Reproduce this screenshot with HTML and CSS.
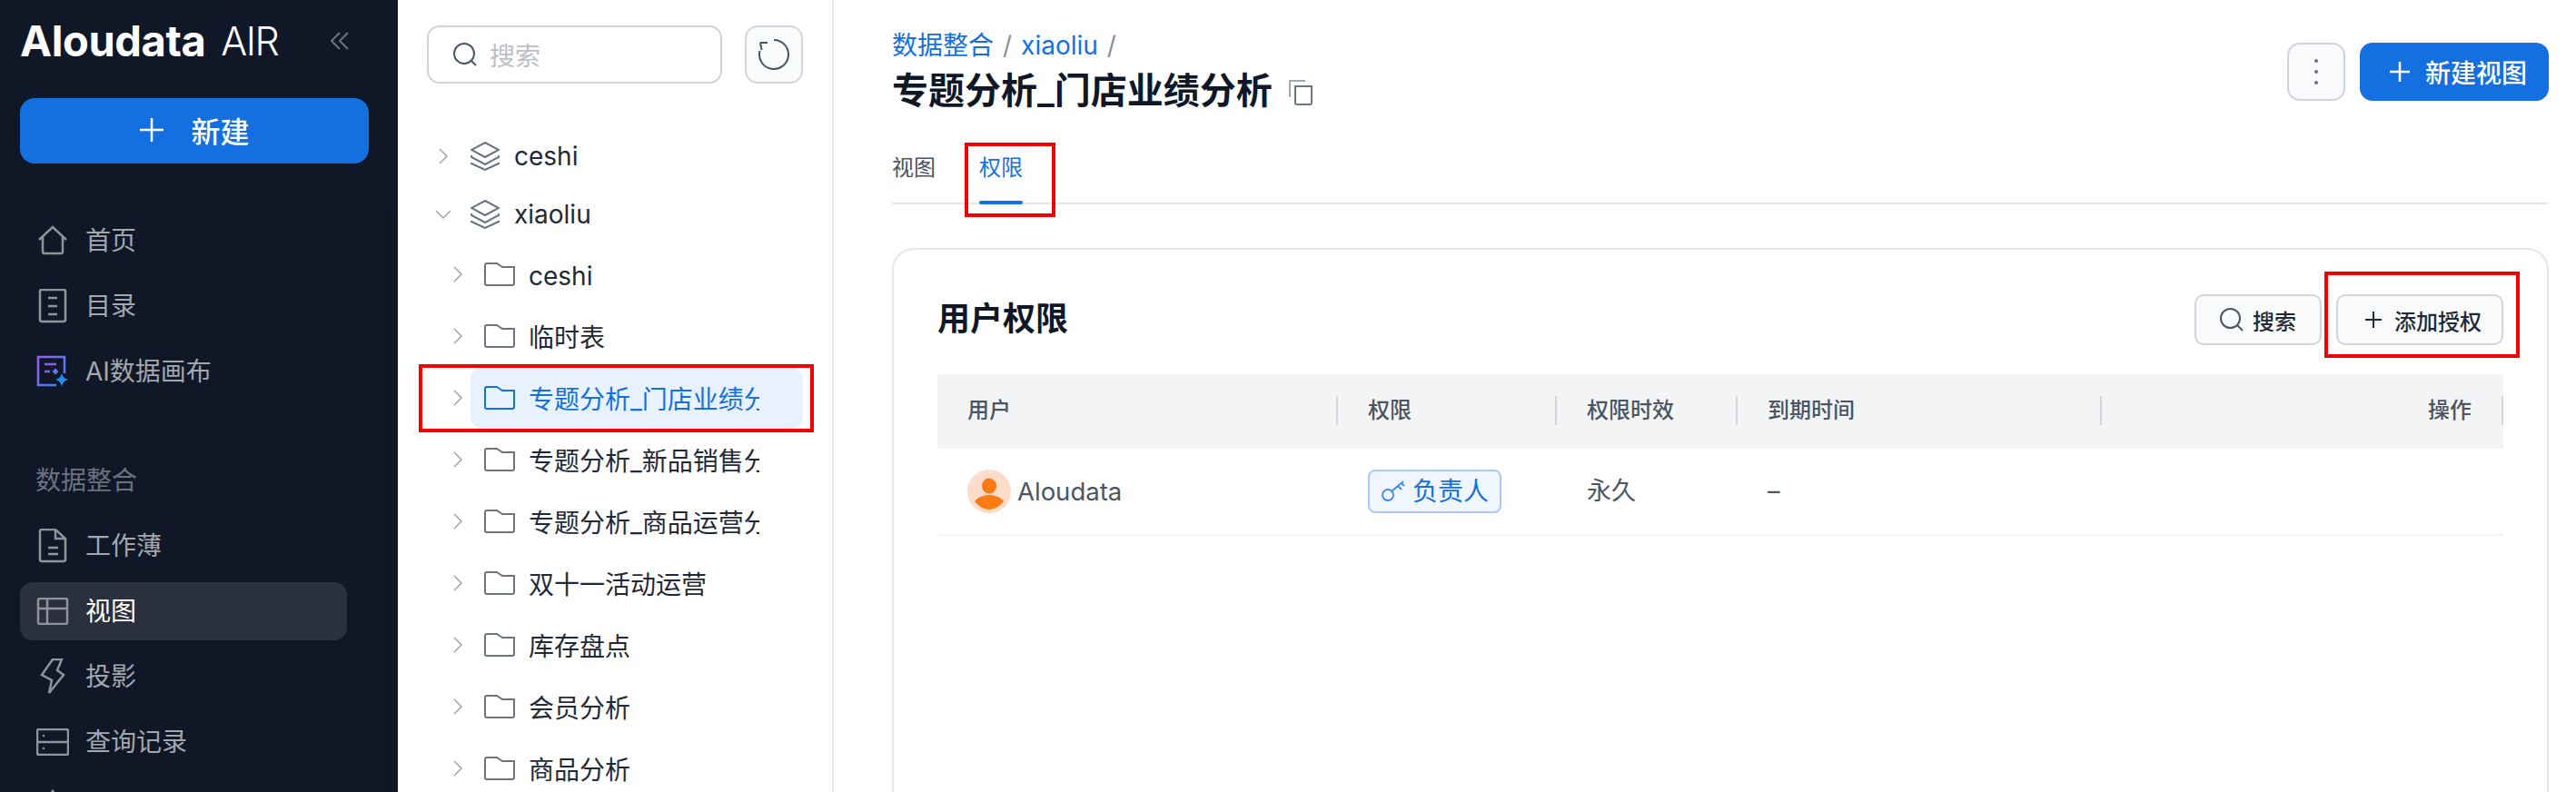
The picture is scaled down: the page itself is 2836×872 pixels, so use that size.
FILE: index.html
```html
<!DOCTYPE html>
<html lang="zh-CN">
<head>
  <meta charset="UTF-8">
  <title>Aloudata AIR</title>
  <link rel="stylesheet" href="styles.css">
</head>
<body>
  <!-- left nav -->
  <aside class="sidebar">
    <div class="logo-row">
      <span class="logo-main">Aloudata</span>
      <span class="logo-sub">AIR</span>
      <svg class="collapse" width="20" height="20" viewBox="0 0 20 20"><path d="M10 1 1 10l9 9M19 1l-9 9 9 9"/></svg>
    </div>
    <button class="new-btn">
      <svg width="28" height="28" viewBox="0 0 28 28"><path d="M14 1v26M1 14h26"/></svg>
      <span>新建</span>
    </button>
    <div class="scroll-track"></div>
    <nav class="nav">
      <a class="nav-item">
        <svg class="nav-icon" width="34" height="34" viewBox="0 0 34 34"><path d="M2 16 17 2l15 14M6 13v16a2 2 0 0 0 2 2h18a2 2 0 0 0 2-2V13"/></svg>
        首页
      </a>
      <a class="nav-item">
        <svg class="nav-icon" width="34" height="38" viewBox="0 0 34 38"><rect x="3" y="1" width="28" height="35" rx="2"/><path d="M12 10h10M12 19h10M12 28h10"/></svg>
        目录
      </a>
      <a class="nav-item">
        <svg class="nav-icon nav-icon-ai" width="36" height="36" viewBox="0 0 36 36">
          <defs><linearGradient id="aiGrad" x1="0" y1="0" x2="1" y2="1"><stop offset="0" stop-color="#9b5cf0"/><stop offset="1" stop-color="#2f8bf2"/></linearGradient></defs>
          <path stroke="url(#aiGrad)" d="M31 20V2H2v31h20"/>
          <path stroke="#8b5cf6" d="M9 10h13M9 18h6"/>
          <path stroke="#5b7cf5" d="M18 18h6M21 15v6"/>
          <path class="ai-star" d="M28 20c1 4 3 6 7 7-4 1-6 3-7 8-1-5-3-7-7-8 4-1 6-3 7-7z"/>
        </svg>
        AI数据画布
      </a>
      <div class="nav-label">数据整合</div>
      <a class="nav-item">
        <svg class="nav-icon" width="34" height="38" viewBox="0 0 34 38"><path d="M5 1h15l11 10v23a2 2 0 0 1-2 2H5a2 2 0 0 1-2-2V3a2 2 0 0 1 2-2zM20 1v10h11M12 21h11M12 28h11"/></svg>
        工作薄
      </a>
      <a class="nav-item active">
        <svg class="nav-icon" width="34" height="30" viewBox="0 0 34 30"><rect x="1" y="1" width="32" height="28" rx="2"/><path d="M1 12h32M11 1v28"/></svg>
        视图
      </a>
      <a class="nav-item">
        <svg class="nav-icon" width="26" height="40" viewBox="0 0 26 40"><path d="M13 1h10l-5 12 7 5L9 38l3-14-11-6z"/></svg>
        投影
      </a>
      <a class="nav-item">
        <svg class="nav-icon" width="36" height="30" viewBox="0 0 36 30"><rect x="1" y="1" width="34" height="28" rx="2"/><path d="M1 15h34"/><circle class="dot" cx="8" cy="8" r="1.3"/><circle class="dot" cx="8" cy="22" r="1.3"/></svg>
        查询记录
      </a>
      <a class="nav-item">
        <svg class="nav-icon nav-icon-cut" width="34" height="34" viewBox="0 0 34 34"><path d="M17 2 3 22h28z"/></svg>
      </a>
    </nav>
  </aside>

  <!-- tree panel -->
  <section class="tree-panel">
    <div class="tree-search">
      <div class="search-input">
        <svg class="search-icon" width="28" height="28" viewBox="0 0 28 28"><circle cx="13" cy="13" r="11"/><path d="m21 21 5 5"/></svg>
        <span class="placeholder">搜索</span>
      </div>
      <button class="icon-btn">
        <svg class="refresh-icon" width="36" height="36" viewBox="0 0 36 36"><path d="M18 2a16 16 0 1 1-15.500 12M3 5h8M3 5l1.500 8"/></svg>
      </button>
    </div>
    <ul class="tree">
      <li class="tree-row top">
        <svg class="chev" width="18" height="18" viewBox="0 0 18 18"><path d="m5 1 8 8-8 8"/></svg>
        <svg class="db-icon" width="32" height="32" viewBox="0 0 32 32"><path d="m16 1 15 8-15 8L1 9zM1 15l0 2 15 8 15-8 0-2M1 23l0 1 15 7 15-7 0-1"/></svg>
        <span class="tree-label">ceshi</span>
      </li>
      <li class="tree-row top">
        <svg class="chev" width="18" height="18" viewBox="0 0 18 18"><path d="m1 5 8 8 8-8"/></svg>
        <svg class="db-icon" width="32" height="32" viewBox="0 0 32 32"><path d="m16 1 15 8-15 8L1 9zM1 15l0 2 15 8 15-8 0-2M1 23l0 1 15 7 15-7 0-1"/></svg>
        <span class="tree-label">xiaoliu</span>
      </li>
      <li class="tree-row sub">
        <svg class="chev" width="18" height="18" viewBox="0 0 18 18"><path d="m5 1 8 8-8 8"/></svg>
        <div class="tree-cell">
          <svg class="folder" width="34" height="26" viewBox="0 0 34 26"><path d="M1 3a2 2 0 0 1 2-2h11l6 4h13v18a2 2 0 0 1-2 2H3a2 2 0 0 1-2-2z"/></svg>
          <span class="tree-label">ceshi</span>
        </div>
      </li>
      <li class="tree-row sub">
        <svg class="chev" width="18" height="18" viewBox="0 0 18 18"><path d="m5 1 8 8-8 8"/></svg>
        <div class="tree-cell">
          <svg class="folder" width="34" height="26" viewBox="0 0 34 26"><path d="M1 3a2 2 0 0 1 2-2h11l6 4h13v18a2 2 0 0 1-2 2H3a2 2 0 0 1-2-2z"/></svg>
          <span class="tree-label">临时表</span>
        </div>
      </li>
      <li class="tree-row sub selected">
        <svg class="chev" width="18" height="18" viewBox="0 0 18 18"><path d="m5 1 8 8-8 8"/></svg>
        <div class="tree-cell">
          <svg class="folder" width="34" height="26" viewBox="0 0 34 26"><path d="M1 3a2 2 0 0 1 2-2h11l6 4h13v18a2 2 0 0 1-2 2H3a2 2 0 0 1-2-2z"/></svg>
          <span class="tree-label">专题分析_门店业绩分析</span>
        </div>
      </li>
      <li class="tree-row sub">
        <svg class="chev" width="18" height="18" viewBox="0 0 18 18"><path d="m5 1 8 8-8 8"/></svg>
        <div class="tree-cell">
          <svg class="folder" width="34" height="26" viewBox="0 0 34 26"><path d="M1 3a2 2 0 0 1 2-2h11l6 4h13v18a2 2 0 0 1-2 2H3a2 2 0 0 1-2-2z"/></svg>
          <span class="tree-label">专题分析_新品销售分析</span>
        </div>
      </li>
      <li class="tree-row sub">
        <svg class="chev" width="18" height="18" viewBox="0 0 18 18"><path d="m5 1 8 8-8 8"/></svg>
        <div class="tree-cell">
          <svg class="folder" width="34" height="26" viewBox="0 0 34 26"><path d="M1 3a2 2 0 0 1 2-2h11l6 4h13v18a2 2 0 0 1-2 2H3a2 2 0 0 1-2-2z"/></svg>
          <span class="tree-label">专题分析_商品运营分析</span>
        </div>
      </li>
      <li class="tree-row sub">
        <svg class="chev" width="18" height="18" viewBox="0 0 18 18"><path d="m5 1 8 8-8 8"/></svg>
        <div class="tree-cell">
          <svg class="folder" width="34" height="26" viewBox="0 0 34 26"><path d="M1 3a2 2 0 0 1 2-2h11l6 4h13v18a2 2 0 0 1-2 2H3a2 2 0 0 1-2-2z"/></svg>
          <span class="tree-label">双十一活动运营</span>
        </div>
      </li>
      <li class="tree-row sub">
        <svg class="chev" width="18" height="18" viewBox="0 0 18 18"><path d="m5 1 8 8-8 8"/></svg>
        <div class="tree-cell">
          <svg class="folder" width="34" height="26" viewBox="0 0 34 26"><path d="M1 3a2 2 0 0 1 2-2h11l6 4h13v18a2 2 0 0 1-2 2H3a2 2 0 0 1-2-2z"/></svg>
          <span class="tree-label">库存盘点</span>
        </div>
      </li>
      <li class="tree-row sub">
        <svg class="chev" width="18" height="18" viewBox="0 0 18 18"><path d="m5 1 8 8-8 8"/></svg>
        <div class="tree-cell">
          <svg class="folder" width="34" height="26" viewBox="0 0 34 26"><path d="M1 3a2 2 0 0 1 2-2h11l6 4h13v18a2 2 0 0 1-2 2H3a2 2 0 0 1-2-2z"/></svg>
          <span class="tree-label">会员分析</span>
        </div>
      </li>
      <li class="tree-row sub">
        <svg class="chev" width="18" height="18" viewBox="0 0 18 18"><path d="m5 1 8 8-8 8"/></svg>
        <div class="tree-cell">
          <svg class="folder" width="34" height="26" viewBox="0 0 34 26"><path d="M1 3a2 2 0 0 1 2-2h11l6 4h13v18a2 2 0 0 1-2 2H3a2 2 0 0 1-2-2z"/></svg>
          <span class="tree-label">商品分析</span>
        </div>
      </li>
    </ul>
  </section>

  <!-- main content -->
  <main class="main">
    <header class="page-head">
      <div>
        <div class="crumbs">
          <a>数据整合</a><span class="sep">/</span><a>xiaoliu</a><span class="sep">/</span>
        </div>
        <h1 class="page-title">
          专题分析_门店业绩分析
          <svg class="copy-icon" width="26" height="28" viewBox="0 0 26 28"><path class="copy-back" d="M1 19V1h17"/><path d="M7 7h18v18a2 2 0 0 1-2 2H9a2 2 0 0 1-2-2z"/></svg>
        </h1>
      </div>
      <div class="head-actions">
        <button class="icon-btn more-btn">
          <svg width="6" height="30" viewBox="0 0 6 30"><circle cx="3" cy="3" r="2"/><circle cx="3" cy="15" r="2"/><circle cx="3" cy="27" r="2"/></svg>
        </button>
        <button class="primary-btn">
          <svg width="24" height="24" viewBox="0 0 24 24"><path d="M12 1v22M1 12h22"/></svg>
          新建视图
        </button>
      </div>
    </header>

    <div class="tabs">
      <a class="tab">视图</a>
      <a class="tab active">权限</a>
    </div>

    <section class="card">
      <div class="card-head">
        <h2 class="card-title">用户权限</h2>
        <div class="card-actions">
          <button class="ghost-btn search-btn">
            <svg class="search-icon" width="26" height="26" viewBox="0 0 26 26"><circle cx="11.500" cy="11.500" r="10.500"/><path d="m19 19 6 6"/></svg>
            搜索
          </button>
          <button class="ghost-btn add-btn">
            <svg class="plus-dark" width="20" height="20" viewBox="0 0 20 20"><path d="M10 1v18M1 10h18"/></svg>
            添加授权
          </button>
        </div>
      </div>

      <div class="table">
        <div class="table-row table-head">
          <div class="th">用户</div>
          <div class="th">权限</div>
          <div class="th">权限时效</div>
          <div class="th">到期时间</div>
          <div class="th th-right">操作</div>
        </div>
        <div class="table-row table-body">
          <div class="td user-cell">
            <svg width="48" height="48" viewBox="0 0 48 48">
              <circle cx="24" cy="24" r="24" fill="#fddcc9"/>
              <ellipse cx="24" cy="18" rx="8" ry="8.500" fill="#fb7a14"/>
              <path d="M8 35c4-5 10-7 16-7s12 2 16 7c-4 5-10 9-16 9s-12-4-16-9z" fill="#fb7a14"/>
            </svg>
            <span>Aloudata</span>
          </div>
          <div class="td">
            <span class="role-tag">
              <svg width="28" height="24" viewBox="0 0 28 24"><circle cx="8" cy="16" r="6"/><path d="m12 12 13-11M19 6l4 4M23 3l3 3"/></svg>
              负责人
            </span>
          </div>
          <div class="td">永久</div>
          <div class="td">–</div>
          <div class="td"></div>
        </div>
      </div>
    </section>
  </main>

  <!-- red annotation boxes drawn over the screenshot -->
  <div class="mark mark-row"></div>
  <div class="mark mark-tab"></div>
  <div class="mark mark-add"></div>
</body>
</html>
```

FILE: styles.css
```css
* {
  box-sizing: border-box;
}
html, body {
  height: 100%;
}
body {
  margin: 0;
  display: flex;
  height: 872px;
  overflow: hidden;
  position: relative;
  background: #fff;
  color: #1f2937;
  font-family: Inter, "Noto Sans CJK SC", sans-serif;
  font-size: 28px;
}
button {
  font-family: inherit;
  cursor: pointer;
}
svg {
  flex-shrink: 0;
  fill: none;
}

/* sidebar */
.sidebar {
  width: 438px;
  flex-shrink: 0;
  padding: 0 32px 0 22px;
  background: #101828;
  position: relative;
}
.logo-row {
  display: flex;
  align-items: center;
  height: 108px;
  padding-bottom: 18px;
  color: #fff;
}
.logo-main {
  font-size: 47px;
  font-weight: 700;
  letter-spacing: -0.4px;
  line-height: 60px;
}
.logo-sub {
  margin-left: 17px;
  font-size: 43px;
  font-weight: 300;
  letter-spacing: -1.5px;
  line-height: 60px;
}
.collapse {
  margin-left: auto;
  margin-right: 22px;
  stroke: #6b7280;
  stroke-width: 2;
}
.new-btn {
  display: flex;
  align-items: center;
  justify-content: center;
  gap: 29px;
  width: 384px;
  height: 72px;
  padding: 0 0 3px;
  border: none;
  border-radius: 16px;
  background: #1470e0;
  color: #fff;
  font-size: 32px;
  font-weight: 500;
}
.new-btn svg {
  stroke: #fff;
  stroke-width: 2.500;
}
.scroll-track {
  position: absolute;
  left: 420px;
  top: 234px;
  bottom: 0;
  width: 12px;
  border-radius: 6px 6px 0 0;
  background: #0e1624;
}
.nav {
  margin-top: 53px;
  display: flex;
  flex-direction: column;
  gap: 8px;
  width: 360px;
}
.nav-item {
  display: flex;
  align-items: center;
  height: 64px;
  padding-left: 18px;
  border-radius: 14px;
  color: #a3a7ae;
  line-height: 40px;
  flex-shrink: 0;
}
.nav-item.active {
  background: #2a303d;
  color: #fff;
}
.nav-icon {
  width: 36px;
  margin-right: 18px;
  stroke: #8f949c;
  stroke-width: 2.500;
}
.nav-icon-cut {
  align-self: flex-start;
  margin-top: 12px;
}
.nav-icon-ai .ai-star {
  fill: #1f8ff5;
  stroke: none;
}
.nav-icon .dot {
  fill: #8f949c;
  stroke: none;
}
.nav-label {
  margin-top: 60px;
  margin-bottom: 12px;
  padding: 0 0 0 17px;
  height: 40px;
  line-height: 40px;
  color: #6b7280;
}

/* tree */
.tree-panel {
  width: 480px;
  flex-shrink: 0;
  padding: 28px 32px 0;
  border-right: 2px solid #e5e7eb;
}
.tree-search {
  display: flex;
  gap: 25px;
}
.search-input {
  display: flex;
  align-items: center;
  gap: 13px;
  width: 325px;
  height: 64px;
  padding-left: 26px;
  border: 2px solid #d1d5db;
  border-radius: 14px;
}
.search-icon {
  stroke: #4b5563;
  stroke-width: 2;
}
.placeholder {
  color: #bdbfc4;
}
.icon-btn {
  display: flex;
  align-items: center;
  justify-content: center;
  width: 64px;
  height: 64px;
  padding: 0;
  border: 2px solid #d1d5db;
  border-radius: 14px;
  background: #f9fafb;
}
.refresh-icon {
  stroke: #4b5563;
  stroke-width: 2;
}
.tree {
  list-style: none;
  margin: 48px 0 0;
  padding: 0;
}
.tree-row {
  display: flex;
  align-items: center;
}
.tree-row.top {
  height: 64px;
  padding-left: 9px;
}
.tree-row.sub {
  height: 68px;
  padding-left: 25px;
}
.chev {
  stroke: #9ca3af;
  stroke-width: 1.500;
}
.top .chev {
  margin-right: 21px;
}
.sub .chev {
  margin-right: 5px;
}
.db-icon {
  margin-right: 16px;
  stroke: #6b7280;
  stroke-width: 2;
}
.tree-cell {
  display: flex;
  align-items: center;
  width: 366px;
  height: 68px;
  padding-left: 15px;
  border-radius: 14px;
}
.folder {
  margin-right: 15px;
  stroke: #6b7280;
  stroke-width: 2;
}
.tree-label {
  line-height: 40px;
  white-space: nowrap;
}
.tree-cell .tree-label {
  display: block;
  width: 254px;
  padding-top: 4px;
  overflow: hidden;
}
.selected .tree-cell {
  background: #e8f1fe;
  color: #1470e0;
}
.selected .folder {
  stroke: #1470e0;
}

/* main */
.main {
  flex: 1;
  min-width: 0;
  padding: 0 30px 0 64px;
}
.page-head {
  display: flex;
  justify-content: space-between;
  height: 140px;
}
.crumbs {
  display: flex;
  align-items: center;
  gap: 10px;
  margin-top: 32px;
  height: 36px;
  line-height: 36px;
  color: #1470e0;
}
.crumbs .sep {
  color: #8a8f98;
}
.page-title {
  display: flex;
  align-items: center;
  gap: 18px;
  margin: 4px 0 0;
  height: 56px;
  font-size: 40px;
  font-weight: 600;
  line-height: 56px;
  color: #101828;
}
.copy-icon {
  stroke: #6b7280;
  stroke-width: 2;
  margin-top: 4px;
}
.copy-back {
  stroke: #a3a7ae;
}
.head-actions {
  display: flex;
  gap: 16px;
  margin-top: 47px;
}
.more-btn svg {
  fill: #6b7280;
}
.primary-btn {
  display: flex;
  align-items: center;
  gap: 16px;
  width: 208px;
  height: 64px;
  padding: 0 0 0 32px;
  border: none;
  border-radius: 14px;
  background: #1470e0;
  color: #fff;
  font-size: 28px;
  font-weight: 500;
  white-space: nowrap;
}
.primary-btn svg {
  stroke: #fff;
  stroke-width: 2.500;
}
.tabs {
  display: flex;
  gap: 48px;
  height: 85px;
  border-bottom: 2px solid #e5e7eb;
}
.tab {
  height: 85px;
  padding-top: 28px;
  line-height: 34px;
  font-size: 24px;
  color: #4b5563;
}
.tab.active {
  color: #1470e0;
  position: relative;
}
.tab.active::after {
  content: "";
  position: absolute;
  left: 0;
  right: 0;
  bottom: 0;
  height: 4px;
  border-radius: 2px;
  background: #1470e0;
}
.card {
  height: 599px;
  margin-top: 48px;
  padding: 49px 48px 0 48px;
  border: 2px solid #e5e7eb;
  border-bottom: none;
  border-radius: 24px 24px 0 0;
  box-shadow: 0 2px 6px rgba(16, 24, 40, 0.04);
}
.card-head {
  display: flex;
  justify-content: space-between;
  align-items: center;
  height: 56px;
}
.card-title {
  margin: -2px 0 0;
  font-size: 36px;
  font-weight: 600;
  color: #101828;
  line-height: 50px;
}
.card-actions {
  display: flex;
  gap: 16px;
}
.ghost-btn {
  display: flex;
  align-items: center;
  height: 56px;
  padding: 0;
  border: 2px solid #d1d5db;
  border-radius: 10px;
  background: #f9fafb;
  color: #1f2937;
  font-size: 24px;
  font-weight: 500;
  white-space: nowrap;
}
.search-btn {
  width: 140px;
  gap: 10px;
  padding-left: 26px;
}
.add-btn {
  width: 184px;
  gap: 13px;
  padding-left: 29px;
}
.plus-dark {
  stroke: #1f2937;
  stroke-width: 2;
}
.table {
  margin-top: 32px;
}
.table-row {
  display: grid;
  grid-template-columns: 441px 241px 199px 401px 442px;
  align-items: center;
}
.table-head {
  height: 82px;
  background: #f3f4f6;
  padding-bottom: 2px;
}
.th {
  height: 32px;
  padding: 0 33px;
  border-right: 2px solid #d1d5db;
  font-size: 24px;
  line-height: 32px;
  color: #4b5563;
  font-weight: 500;
}
.th-right {
  text-align: right;
}
.table-body {
  height: 96px;
  border-bottom: 2px solid #f3f4f6;
}
.td {
  padding: 0 33px;
  font-size: 27px;
  color: #4b5563;
  line-height: 40px;
}
.user-cell {
  display: flex;
  align-items: center;
  gap: 7px;
  font-size: 27.500px;
}
.role-tag {
  display: inline-flex;
  align-items: center;
  gap: 7px;
  height: 48px;
  padding: 0 12px;
  border: 2px solid #a9c9f5;
  border-radius: 8px;
  background: #f0f6ff;
  color: #1470e0;
  font-size: 28px;
  white-space: nowrap;
}
.role-tag svg {
  stroke: #3b8bee;
  stroke-width: 1.800;
}

/* red boxes */
.mark {
  position: absolute;
  border: 4px solid #f50000;
}
.mark-row {
  left: 461px;
  top: 401px;
  width: 435px;
  height: 75px;
}
.mark-tab {
  left: 1062px;
  top: 157px;
  width: 100px;
  height: 82px;
}
.mark-add {
  left: 2559px;
  top: 299px;
  width: 215px;
  height: 95px;
}
```
